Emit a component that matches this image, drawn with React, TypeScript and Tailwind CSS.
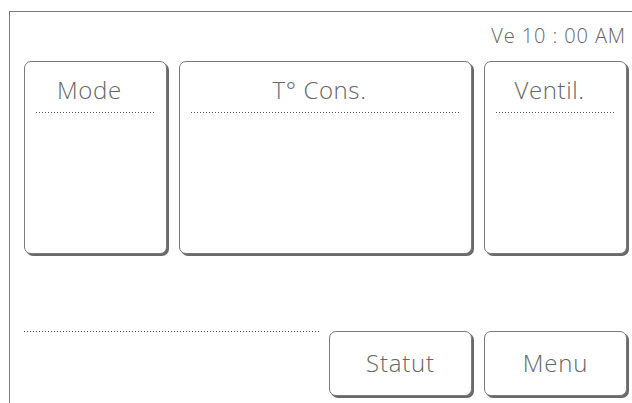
import type { ReactNode } from "react";

const dots =
  "bg-[linear-gradient(to_right,#555_1px,transparent_1px)] bg-[length:3px_1px] bg-repeat-x h-px";

function Panel({ title, width }: { title: string; width: string }) {
  return (
    <div
      className={`${width} h-[193px] rounded-[7px] border border-[#7a7a7a] shadow-[2px_2px_0_#6a6a6a] bg-white flex flex-col`}
    >
      <div className="h-[50px] flex items-end justify-center pr-[12px] pb-[10px] text-[24px] tracking-[0.6px] leading-none text-[#666] font-light">
        {title}
      </div>
      <div className={`${dots} mx-[11px]`} />
    </div>
  );
}

function Button({ children }: { children: ReactNode }) {
  return (
    <button className="w-[143px] h-[65px] rounded-[7px] border border-[#7a7a7a] shadow-[2px_2px_0_#6a6a6a] bg-white text-[24px] tracking-[0.8px] text-[#666] font-light flex items-center justify-center pb-[2px]">
      {children}
    </button>
  );
}

export default function App() {
  return (
    <div className="w-[632px] h-[403px] bg-white overflow-hidden font-['Open_Sans',sans-serif]">
      <div className="mt-[11px] ml-[9px] h-[392px] border-t border-l border-[#7a7a7a] pl-[14px] pr-[5px] flex flex-col">
        <div className="h-[49px] flex justify-end pt-[14px] pr-[1px] text-[20px] tracking-[0.9px] leading-none text-[#666] font-light">
          Ve 10 : 00 AM
        </div>

        <div className="flex gap-[12px]">
          <Panel title="Mode" width="w-[143px]" />
          <Panel title="T° Cons." width="w-[294px]" />
          <Panel title="Ventil." width="w-[143px]" />
        </div>

        <div className="mt-[77px] flex items-start">
          <div className={`${dots} w-[297px]`} />
          <div className="ml-[9px] flex gap-[12px]">
            <Button>Statut</Button>
            <Button>Menu</Button>
          </div>
        </div>
      </div>
    </div>
  );
}
